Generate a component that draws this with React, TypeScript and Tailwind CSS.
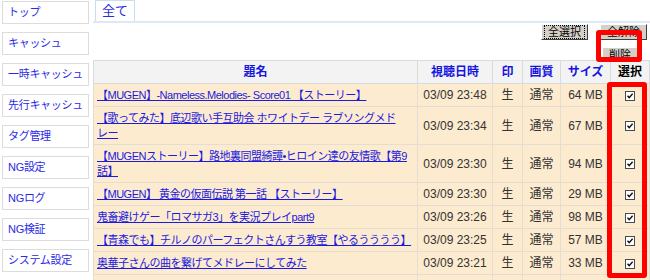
const menu = ["トップ", "キャッシュ", "一時キャッシュ", "先行キャッシュ", "タグ管理", "NG設定", "NGログ", "NG検証", "システム設定"];

type Row = { title: string[]; date: string; size: string };

const rows: Row[] = [
  { title: ["【MUGEN】-Nameless.Melodies- Score01 【ストーリー】"], date: "03/09 23:48", size: "64 MB" },
  { title: ["【歌ってみた】底辺歌い手互助会 ホワイトデー ラブソングメド", "レー"], date: "03/09 23:34", size: "67 MB" },
  { title: ["【MUGENストーリー】路地裏同盟綺譚•ヒロイン達の友情歌【第9", "話】"], date: "03/09 23:30", size: "94 MB" },
  { title: ["【MUGEN】 黄金の仮面伝説 第一話 【ストーリー】"], date: "03/09 23:30", size: "29 MB" },
  { title: ["鬼畜避けゲー「ロマサガ3」を実況プレイpart9"], date: "03/09 23:26", size: "98 MB" },
  { title: ["【青森でも】チルノのパーフェクトさんすう教室【やるうううう】"], date: "03/09 23:25", size: "57 MB" },
  { title: ["奥華子さんの曲を繋げてメドレーにしてみた"], date: "03/09 23:21", size: "33 MB" },
];

function CheckBox() {
  return (
    <span className="inline-flex w-[10px] h-[10px] border border-[#4a4a4a] bg-white items-center justify-center align-middle">
      <svg width="8" height="8" viewBox="0 0 8 8">
        <path d="M1.5 3.8 L3.2 5.6 L6.6 1.8" fill="none" stroke="#111" strokeWidth="1.4" />
      </svg>
    </span>
  );
}

function OldButton({ label, focus }: { label: string; focus?: boolean }) {
  return (
    <button className="h-[16px] px-[2px] bg-[#d4d0c8] border border-t-[#fff] border-l-[#fff] border-r-[#404040] border-b-[#404040] text-[11px] leading-[12px] text-black">
      <span className={focus ? "px-[3px] border border-dotted border-black" : "px-[4px]"}>{label}</span>
    </button>
  );
}

export default function App() {
  const td = "border border-[#e3ddd2] pt-[4px] pb-[3px] leading-[15px] text-center text-[12px] text-[#333]";
  const th = "border border-[#dadada] py-[3px] leading-[16px] text-[12px] font-bold";
  return (
    <div className="relative w-[650px] h-[280px] overflow-hidden bg-white flex" style={{ fontFamily: '"Liberation Sans", "Noto Sans CJK JP", sans-serif' }}>
      <aside className="w-[93px] shrink-0 pl-[2px] pt-[1px] flex flex-col gap-[8px]">
        {menu.map((m) => (
          <div key={m} className="w-[87px] h-[23px] border border-[#dcdcdc] pl-[5px] flex items-center whitespace-nowrap text-[11px] tracking-[-0.3px] text-[#2a2ae6]">
            {m}
          </div>
        ))}
      </aside>
      <main className="flex-1 flex flex-col">
        <div className="h-[24px] border-b-2 border-[#dbeaf5] flex items-end pl-[2px]">
          <div className="w-[40px] h-[21px] border border-b-0 border-[#c8e0ee] flex items-center justify-center text-[13px] text-[#2a2ae6]">
            全て
          </div>
        </div>
        <div className="h-[37px] flex flex-col items-end pt-[1px]">
          <div className="flex gap-[12px] pr-[3px]">
            <OldButton label="全選択" focus />
            <OldButton label="全解除" />
          </div>
          <div className="mt-[2px] pr-[12px]">
            <OldButton label="削除" />
          </div>
        </div>
        <table className="table-fixed border-collapse w-[556px]">
          <colgroup>
            <col className="w-[324px]" />
            <col className="w-[75px]" />
            <col className="w-[30px]" />
            <col className="w-[38px]" />
            <col className="w-[50px]" />
            <col className="w-[39px]" />
          </colgroup>
          <thead>
            <tr className="bg-[#f3f3f3] text-[#1515e0]">
              <th className={th}>題名</th>
              <th className={th}>視聴日時</th>
              <th className={th}>印</th>
              <th className={th}>画質</th>
              <th className={th}>サイズ</th>
              <th className={th + " text-black"}>選択</th>
            </tr>
          </thead>
          <tbody>
            {rows.map((r, i) => (
              <tr key={i} className="bg-[#fdebd0]">
                <td className="border border-[#e3ddd2] pt-[4px] pb-[3px] px-[3px] leading-[15px] text-[11px] tracking-[-0.5px] whitespace-nowrap overflow-hidden">
                  <a href="#" className="text-[#1a1ae0] underline">
                    {r.title.map((t, j) => (
                      <span key={j}>
                        {j > 0 && <br />}
                        {t}
                      </span>
                    ))}
                  </a>
                </td>
                <td className={td}>{r.date}</td>
                <td className={td}>生</td>
                <td className={td}>通常</td>
                <td className={td}>{r.size}</td>
                <td className={td}>
                  <CheckBox />
                </td>
              </tr>
            ))}
            {/* next row, only its top edge shows */}
            <tr className="bg-[#fdebd0] h-[23px]">
              <td className="border border-[#e3ddd2]" />
              <td className="border border-[#e3ddd2]" />
              <td className="border border-[#e3ddd2]" />
              <td className="border border-[#e3ddd2]" />
              <td className="border border-[#e3ddd2]" />
              <td className="border border-[#e3ddd2]" />
            </tr>
          </tbody>
        </table>
      </main>
      <div className="absolute left-[596px] top-[30px] w-[46px] h-[32px] border-[5px] border-[#f00] rounded-[3px]" />
      <div className="absolute left-[607px] top-[82px] w-[40px] h-[196px] border-[5px] border-[#f00] rounded-[3px]" />
    </div>
  );
}
